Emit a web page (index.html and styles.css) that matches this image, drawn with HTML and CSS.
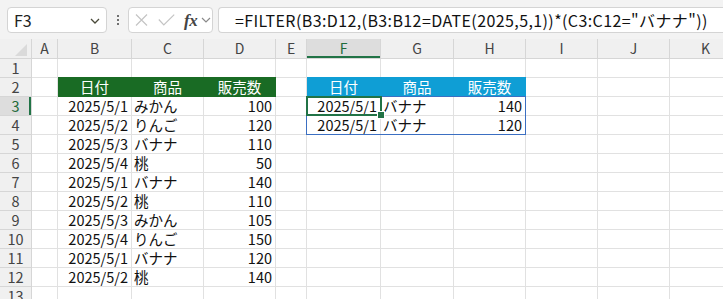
FILE: index.html
```html
<!DOCTYPE html>
<html lang="ja">
<head>
<meta charset="utf-8">
<title>FILTER</title>
<link rel="stylesheet" href="styles.css">
</head>
<body>
<div class="toolbar">
  <div class="namebox"><span class="ref">F3</span>
    <svg class="chev" width="10" height="6" viewBox="0 0 10 6"><path d="M1 1 L5 5 L9 1" fill="none" stroke="#4a4a3a" stroke-width="1.3"/></svg>
  </div>
  <div class="dots"><i></i><i></i><i></i></div>
  <div class="btns">
    <svg width="13" height="12" viewBox="0 0 13 12"><path d="M1 0.5 L12 11.5 M12 0.5 L1 11.5" stroke="#c4c4c4" stroke-width="1.2"/></svg>
    <svg width="17" height="12" viewBox="0 0 17 12"><path d="M0.8 5.5 L5.8 11 L16.2 0.6" fill="none" stroke="#c4c4c4" stroke-width="1.2"/></svg>
    <span class="fx">fx</span>
    <svg class="chev2" width="10" height="6" viewBox="0 0 10 6"><path d="M1 1 L5 5 L9 1" fill="none" stroke="#8a8a8a" stroke-width="1.2"/></svg>
  </div>
  <div class="formula">=FILTER(B3:D12,(B3:B12=DATE(2025,5,1))*(C3:C12="バナナ"))</div>
</div>
<div class="sheet">
  <div class="corner"><span class="tri"></span></div>
  <div class="ch">A</div><div class="ch">B</div><div class="ch">C</div><div class="ch">D</div><div class="ch">E</div><div class="ch sel">F</div><div class="ch">G</div><div class="ch">H</div><div class="ch">I</div><div class="ch">J</div><div class="ch">K</div>

  <div class="rh">1</div><div class="c"></div><div class="c"></div><div class="c"></div><div class="c"></div><div class="c"></div><div class="c"></div><div class="c"></div><div class="c"></div><div class="c"></div><div class="c"></div><div class="c"></div>

  <div class="rh">2</div><div class="c"></div><div class="c hg">日付</div><div class="c hg">商品</div><div class="c hg">販売数</div><div class="c"></div><div class="c hb">日付</div><div class="c hb">商品</div><div class="c hb">販売数</div><div class="c"></div><div class="c"></div><div class="c"></div>

  <div class="rh rsel">3</div><div class="c"></div><div class="c r">2025/5/1</div><div class="c l">みかん</div><div class="c r">100</div><div class="c"></div><div class="c r">2025/5/1</div><div class="c l">バナナ</div><div class="c r">140</div><div class="c"></div><div class="c"></div><div class="c"></div>

  <div class="rh">4</div><div class="c"></div><div class="c r">2025/5/2</div><div class="c l">りんご</div><div class="c r">120</div><div class="c"></div><div class="c r">2025/5/1</div><div class="c l">バナナ</div><div class="c r">120</div><div class="c"></div><div class="c"></div><div class="c"></div>

  <div class="rh">5</div><div class="c"></div><div class="c r">2025/5/3</div><div class="c l">バナナ</div><div class="c r">110</div><div class="c"></div><div class="c"></div><div class="c"></div><div class="c"></div><div class="c"></div><div class="c"></div><div class="c"></div>

  <div class="rh">6</div><div class="c"></div><div class="c r">2025/5/4</div><div class="c l">桃</div><div class="c r">50</div><div class="c"></div><div class="c"></div><div class="c"></div><div class="c"></div><div class="c"></div><div class="c"></div><div class="c"></div>

  <div class="rh">7</div><div class="c"></div><div class="c r">2025/5/1</div><div class="c l">バナナ</div><div class="c r">140</div><div class="c"></div><div class="c"></div><div class="c"></div><div class="c"></div><div class="c"></div><div class="c"></div><div class="c"></div>

  <div class="rh">8</div><div class="c"></div><div class="c r">2025/5/2</div><div class="c l">桃</div><div class="c r">110</div><div class="c"></div><div class="c"></div><div class="c"></div><div class="c"></div><div class="c"></div><div class="c"></div><div class="c"></div>

  <div class="rh">9</div><div class="c"></div><div class="c r">2025/5/3</div><div class="c l">みかん</div><div class="c r">105</div><div class="c"></div><div class="c"></div><div class="c"></div><div class="c"></div><div class="c"></div><div class="c"></div><div class="c"></div>

  <div class="rh">10</div><div class="c"></div><div class="c r">2025/5/4</div><div class="c l">りんご</div><div class="c r">150</div><div class="c"></div><div class="c"></div><div class="c"></div><div class="c"></div><div class="c"></div><div class="c"></div><div class="c"></div>

  <div class="rh">11</div><div class="c"></div><div class="c r">2025/5/1</div><div class="c l">バナナ</div><div class="c r">120</div><div class="c"></div><div class="c"></div><div class="c"></div><div class="c"></div><div class="c"></div><div class="c"></div><div class="c"></div>

  <div class="rh">12</div><div class="c"></div><div class="c r">2025/5/2</div><div class="c l">桃</div><div class="c r">140</div><div class="c"></div><div class="c"></div><div class="c"></div><div class="c"></div><div class="c"></div><div class="c"></div><div class="c"></div>

  <div class="rh">13</div><div class="c"></div><div class="c"></div><div class="c"></div><div class="c"></div><div class="c"></div><div class="c"></div><div class="c"></div><div class="c"></div><div class="c"></div><div class="c"></div><div class="c"></div>

  <div class="spill"></div>
  <div class="active"><span class="handle"></span></div>
</div>
</body>
</html>
```
FILE: styles.css
```css
* { box-sizing: border-box; }
html, body { margin: 0; padding: 0; background: #ffffff; overflow: hidden; }
body {
  width: 723px; height: 299px;
  font-family: "Noto Sans CJK JP", "Noto Sans", sans-serif;
  color: #000;
}

.toolbar {
  height: 39px;
  background: #f3f3f3;
  display: flex;
  align-items: flex-start;
  padding: 7px 0 0 7px;
}
.namebox {
  width: 100px; height: 26px;
  background: #fff;
  border: 1px solid #d4d4d4;
  border-radius: 4px;
  display: flex; align-items: center; justify-content: space-between;
  padding: 0 6px 0 6px;
}
.ref { font-size: 16px; color: #222; line-height: 1; }
.chev { margin-top: 1px; }
.dots {
  width: 21px; height: 26px;
  display: flex; flex-direction: column; align-items: center; justify-content: center; gap: 2px;
}
.dots i { display: block; width: 2px; height: 2px; background: #444; border-radius: 1px; }
.btns {
  width: 85px; height: 26px;
  background: #fff;
  border: 1px solid #d4d4d4;
  border-radius: 4px;
  display: flex; align-items: center;
  padding: 0 0 0 6px;
  gap: 0;
}
.btns svg:first-child { margin-right: 10px; }
.fx {
  font-family: "Liberation Serif", "DejaVu Serif", serif;
  font-style: italic; font-weight: bold;
  font-size: 17px; color: #444;
  margin-left: 9px;
  line-height: 1;
  letter-spacing: -0.5px;
}
.chev2 { margin-left: 4px; }
.formula {
  flex: 1;
  margin-left: 5px;
  height: 26px;
  background: #fff;
  border: 1px solid #d4d4d4;
  border-right: none;
  border-radius: 4px 0 0 4px;
  padding-left: 16px;
  font-size: 16px;
  letter-spacing: 0.4px;
  line-height: 24px;
  white-space: nowrap;
  color: #111;
}

.sheet {
  position: relative;
  display: grid;
  grid-template-columns: 32px 26px 74px 72px 72px 31px 74px 73px 72px 72px 72px 72px;
  grid-template-rows: 20px repeat(13, 19px);
  font-size: 14.5px;
}
.corner {
  background: #f0f0f0;
  border-right: 1px solid #d6d6d6;
  border-bottom: 1px solid #d6d6d6;
  position: relative;
}
.tri {
  position: absolute; right: 4px; bottom: 2px;
  width: 0; height: 0;
  border-left: 12px solid transparent;
  border-bottom: 12px solid #dadada;
}
.ch {
  background: #f0f0f0;
  border-right: 1px solid #d6d6d6;
  border-bottom: 1px solid #d6d6d6;
  color: #444;
  text-align: center;
  font-size: 14px;
  line-height: 19px;
}
.ch.sel {
  background: #dddddd;
  color: #1e6b3a;
  box-shadow: inset 0 -2px 0 #217346;
}
.rh {
  background: #f0f0f0;
  border-right: 1px solid #d6d6d6;
  border-bottom: 1px solid #d6d6d6;
  color: #444;
  text-align: center;
  font-size: 14.5px;
  line-height: 18px;
}
.rh.rsel {
  background: #dddddd;
  color: #1e6b3a;
  box-shadow: inset -2px 0 0 #217346;
}
.c {
  border-right: 1px solid #e1e1e1;
  border-bottom: 1px solid #e1e1e1;
  line-height: 18px;
  white-space: nowrap;
  overflow: visible;
  color: #111;
}
.r { text-align: right; padding-right: 3px; }
.l { text-align: left; padding-left: 2px; }
.hg, .hb { color: #fff; text-align: center; }
.hg { background: #196b24; border-color: #196b24; box-shadow: 0 -1px 0 #196b24; }
.hb { background: #0f9ed5; border-color: #0f9ed5; box-shadow: 0 -1px 0 #0f9ed5; }

.spill {
  position: absolute;
  grid-column: 7 / 10;
  grid-row: 4 / 6;
  top: -1px; left: -1px; right: 0; bottom: 0;
  border: 1px solid #3b6fc2;
  pointer-events: none;
}
.active {
  position: absolute;
  grid-column: 7 / 8;
  grid-row: 4 / 5;
  top: -1px; left: -1px; right: -1px; bottom: 0;
  border: 2px solid #217346;
  pointer-events: none;
}
.handle {
  position: absolute;
  right: -4px; bottom: -4px;
  width: 6px; height: 6px;
  background: #217346;
  outline: 1px solid #fff;
}
```
